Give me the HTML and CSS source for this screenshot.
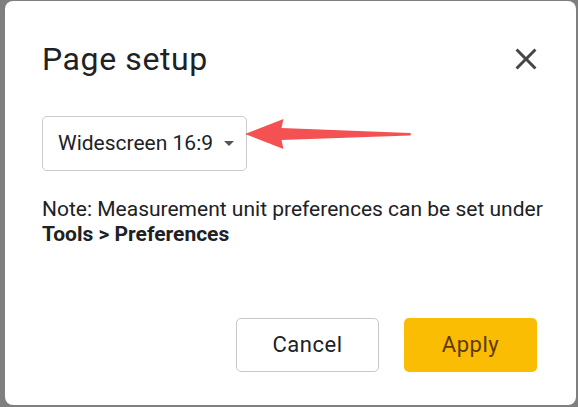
FILE: index.html
```html
<!DOCTYPE html>
<html lang="en">
<head>
<meta charset="utf-8">
<title>Page setup</title>
<link rel="stylesheet" href="styles.css">
</head>
<body>
<div class="dialog">
  <div class="header">
    <h1 class="title">Page setup</h1>
    <button class="close" aria-label="Close">
      <svg width="36" height="36" viewBox="0 0 24 24"><path d="M19 6.41L17.59 5 12 10.59 6.41 5 5 6.41 10.59 12 5 17.59 6.41 19 12 13.41 17.59 19 19 17.59 13.41 12z" fill="#444746"/></svg>
    </button>
  </div>
  <div class="select">
    <span class="select-label">Widescreen 16:9</span>
    <span class="caret"></span>
  </div>
  <p class="note">Note: Measurement unit preferences can be set under<br><b>Tools &gt; Preferences</b></p>
  <div class="actions">
    <button class="btn btn-cancel">Cancel</button>
    <button class="btn btn-apply">Apply</button>
  </div>
</div>
<svg class="annotation" width="578" height="407" viewBox="0 0 578 407">
  <path d="M245 134 L283.5 119 L281.5 128 L410 133 Q412 134 410 135.6 L281.5 140 L283.5 149 Z" fill="#f45252"/>
</svg>
</body>
</html>
```
FILE: styles.css
```css
html, body {
  margin: 0;
  padding: 0;
  height: 100%;
}
body {
  background: #7f7f7f;
  position: relative;
  overflow: hidden;
  font-family: Roboto, "Liberation Sans", Arial, sans-serif;
  color: #202124;
}
.dialog {
  box-sizing: border-box;
  margin: 1px 2px 0 5px;
  height: 404px;
  background: #fff;
  border-radius: 8px;
  padding: 40px 39px 33px 37px;
  display: flex;
  flex-direction: column;
}
.header {
  display: flex;
  justify-content: space-between;
  align-items: flex-start;
}
.title {
  margin: 0;
  font-size: 32px;
  line-height: 36px;
  letter-spacing: 0.6px;
  font-weight: 400;
  color: #202124;
}
.close {
  border: 0;
  background: none;
  padding: 0;
  margin: -0.5px -6.5px 0 0;
  width: 36px;
  height: 36px;
  display: block;
}
.close svg { display: block; }
.select {
  margin-top: 39px;
  align-self: flex-start;
  box-sizing: border-box;
  width: 205px;
  height: 55px;
  border: 1px solid #c9cbcc;
  border-radius: 5px;
  display: flex;
  align-items: center;
  padding: 0 14px 0 15px;
  gap: 11px;
}
.select-label {
  font-size: 21px;
  line-height: 25px;
  color: #202124;
  white-space: nowrap;
}
.caret {
  width: 0;
  height: 0;
  border-left: 5px solid transparent;
  border-right: 5px solid transparent;
  border-top: 5px solid #555;
}
.note {
  margin: 26px 0 0;
  font-size: 21px;
  line-height: 25px;
  color: #202124;
  white-space: nowrap;
}
.note b { font-weight: 700; }
.actions {
  margin-top: auto;
  display: flex;
  justify-content: flex-end;
  gap: 25px;
}
.btn {
  box-sizing: border-box;
  height: 54px;
  border-radius: 5px;
  font-family: Roboto, "Liberation Sans", Arial, sans-serif;
  font-size: 22px;
  font-weight: 400;
  letter-spacing: 0.5px;
  padding: 0 0 2px;
}
.btn-cancel {
  width: 143px;
  background: #fff;
  border: 1px solid #c8c8c8;
  color: #202124;
}
.btn-apply {
  width: 133px;
  background: #fbbc04;
  border: 0;
  color: #5b3a05;
}
.annotation {
  position: absolute;
  left: 0;
  top: 0;
  pointer-events: none;
}
```
